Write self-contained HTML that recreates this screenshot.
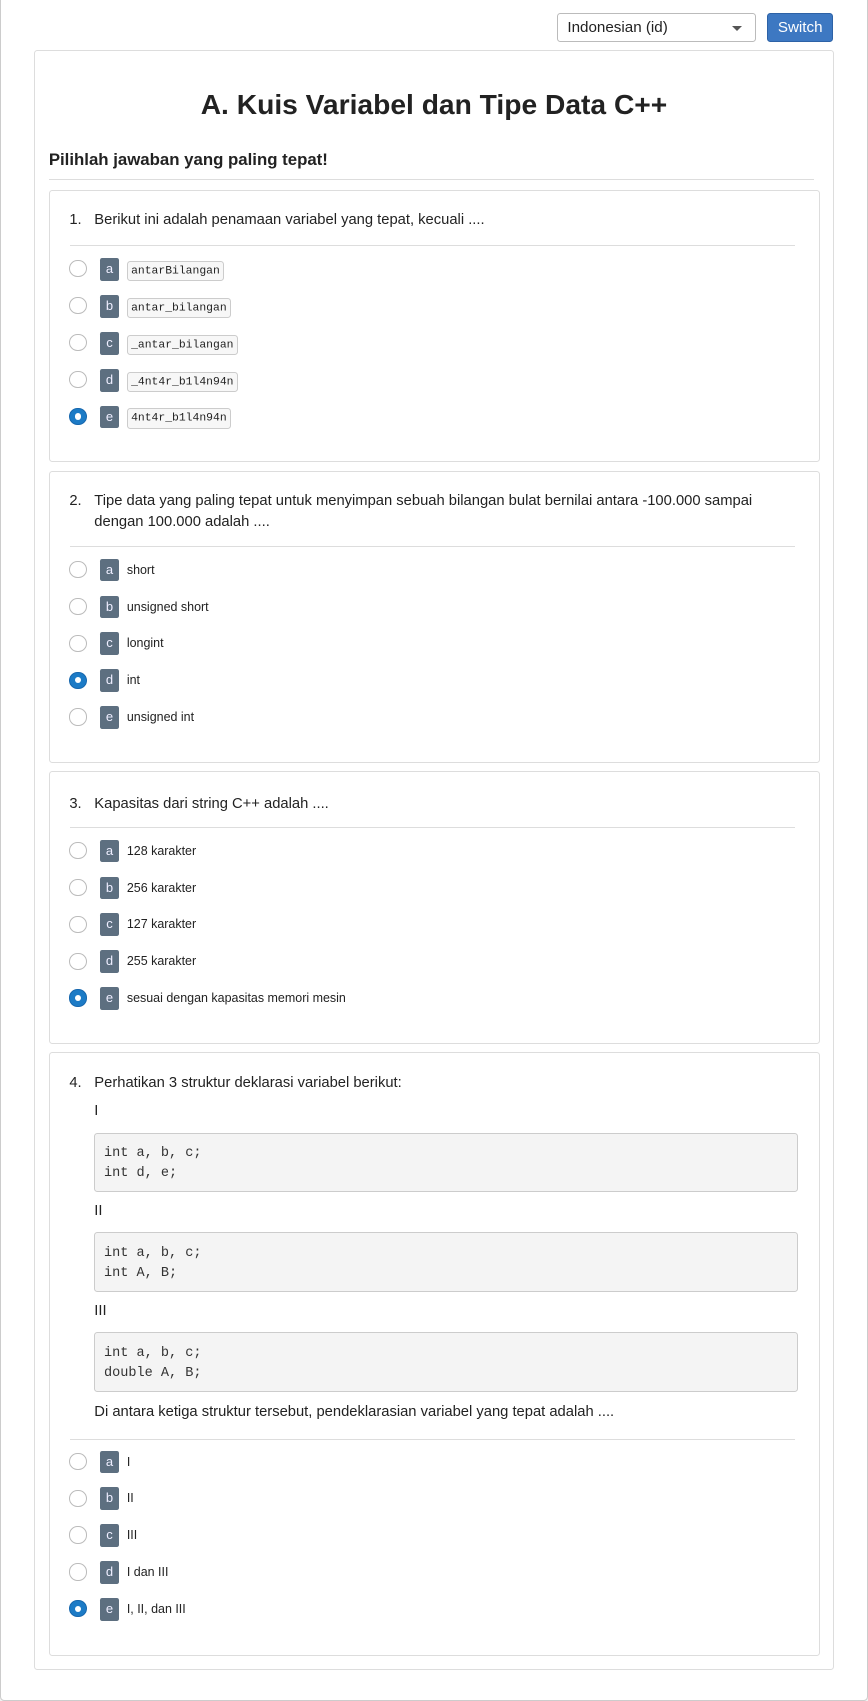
<!DOCTYPE html>
<html><head><meta charset="utf-8">
<style>
html{zoom:1.085}
body{margin:0;width:800px;height:1568px;background:#f2f2f2;font-family:"Liberation Sans",sans-serif;color:#222;position:relative;overflow:hidden}
.frame{position:absolute;left:0;top:-6px;width:798px;height:1572px;background:#fff;border:1px solid #ccc;border-radius:4px}
.abs{position:absolute}
.sel{left:513px;top:12px;width:184px;border:1px solid #bbb;border-radius:3px;background:#fff;font-size:14px;line-height:25px;box-sizing:border-box;padding-left:9px;height:27px}
.sel:after{content:"";position:absolute;right:12px;top:11px;border:5px solid transparent;border-top:5px solid #555}
.btn{left:707px;top:12px;width:61px;height:27px;background:#3d78c2;border:1px solid #2d62a6;border-radius:3px;box-sizing:border-box;color:#fff;font-size:14px;text-align:center;line-height:25px}
.main{left:31px;top:46px;width:736px;height:1491px;border:1px solid #ddd;border-radius:3px;background:#fff}
h1{position:absolute;left:31px;width:738px;top:81px;margin:0;text-align:center;font-size:26px;font-weight:bold;color:#222}
.sub{left:45px;top:138px;font-size:15.5px;font-weight:bold}
.hr{position:absolute;height:1px;background:#ddd}
.card{position:absolute;left:45px;width:709px;border:1px solid #ddd;border-radius:3px;background:#fff}
.q{position:absolute;left:18px;font-size:13.6px;line-height:19px;color:#222}
.q .n{position:absolute;left:0}
.q .t{position:absolute;left:23px;width:650px}
.opt{position:absolute;left:18px;height:21px;font-size:11.5px;line-height:22px}
.r{position:absolute;left:0;top:2px;width:14px;height:14px;border:1px solid #bbb;border-radius:50%;background:#fff}
.r.c{border:1px solid #1667ae;background:#1c7bc6}
.r.c:after{content:"";position:absolute;left:4px;top:4px;width:6px;height:6px;border-radius:50%;background:#fff}
.b{position:absolute;left:28px;top:0;width:18px;height:21px;background:#5d6f80;color:#eef;border-radius:2px;text-align:center;font-size:12px;line-height:21px}
.l{position:absolute;left:53px;top:0;white-space:nowrap}
code{font-family:"Liberation Mono",monospace;font-size:10.5px;background:#f7f7f7;border:1px solid #ccc;border-radius:3px;padding:3px 3px}
pre{position:absolute;left:41px;width:649px;height:55px;margin:0;background:#f4f4f4;border:1px solid #ccc;border-radius:3px;box-sizing:border-box;padding:10px 8px;font-family:"Liberation Mono",monospace;font-size:12.5px;line-height:18px;color:#333}
.rm{position:absolute;left:41px;font-size:13.6px}
</style></head><body>
<div class="frame"></div>
<div class="abs sel">Indonesian (id)</div>
<div class="abs btn">Switch</div>
<div class="abs main"></div>
<h1>A. Kuis Variabel dan Tipe Data C++</h1>
<div class="abs sub">Pilihlah jawaban yang paling tepat!</div>
<div class="hr" style="left:45px;top:165px;width:705px"></div>

<div class="card" style="top:175px;height:249px">
 <div class="q" style="top:18px"><span class="n">1.</span><span class="t">Berikut ini adalah penamaan variabel yang tepat, kecuali ....</span></div>
 <div class="hr" style="left:19px;top:50px;width:668px"></div>
 <div class="opt" style="top:62px"><span class="r"></span><span class="b">a</span><span class="l"><code>antarBilangan</code></span></div>
 <div class="opt" style="top:96px"><span class="r"></span><span class="b">b</span><span class="l"><code>antar_bilangan</code></span></div>
 <div class="opt" style="top:130px"><span class="r"></span><span class="b">c</span><span class="l"><code>_antar_bilangan</code></span></div>
 <div class="opt" style="top:164px"><span class="r"></span><span class="b">d</span><span class="l"><code>_4nt4r_b1l4n94n</code></span></div>
 <div class="opt" style="top:198px"><span class="r c"></span><span class="b">e</span><span class="l"><code>4nt4r_b1l4n94n</code></span></div>
</div>

<div class="card" style="top:434px;height:267px">
 <div class="q" style="top:18px"><span class="n">2.</span><span class="t">Tipe data yang paling tepat untuk menyimpan sebuah bilangan bulat bernilai antara -100.000 sampai dengan 100.000 adalah ....</span></div>
 <div class="hr" style="left:19px;top:68px;width:668px"></div>
 <div class="opt" style="top:80px"><span class="r"></span><span class="b">a</span><span class="l">short</span></div>
 <div class="opt" style="top:114px"><span class="r"></span><span class="b">b</span><span class="l">unsigned short</span></div>
 <div class="opt" style="top:148px"><span class="r"></span><span class="b">c</span><span class="l">longint</span></div>
 <div class="opt" style="top:182px"><span class="r c"></span><span class="b">d</span><span class="l">int</span></div>
 <div class="opt" style="top:216px"><span class="r"></span><span class="b">e</span><span class="l">unsigned int</span></div>
</div>

<div class="card" style="top:711px;height:249px">
 <div class="q" style="top:20px"><span class="n">3.</span><span class="t">Kapasitas dari string C++ adalah ....</span></div>
 <div class="hr" style="left:19px;top:50px;width:668px"></div>
 <div class="opt" style="top:62px"><span class="r"></span><span class="b">a</span><span class="l">128 karakter</span></div>
 <div class="opt" style="top:96px"><span class="r"></span><span class="b">b</span><span class="l">256 karakter</span></div>
 <div class="opt" style="top:130px"><span class="r"></span><span class="b">c</span><span class="l">127 karakter</span></div>
 <div class="opt" style="top:164px"><span class="r"></span><span class="b">d</span><span class="l">255 karakter</span></div>
 <div class="opt" style="top:198px"><span class="r c"></span><span class="b">e</span><span class="l">sesuai dengan kapasitas memori mesin</span></div>
</div>

<div class="card" style="top:970px;height:554px">
 <div class="q" style="top:18px"><span class="n">4.</span><span class="t">Perhatikan 3 struktur deklarasi variabel berikut:</span></div>
 <div class="rm" style="top:46px">I</div>
 <pre style="top:73px">int a, b, c;
int d, e;</pre>
 <div class="rm" style="top:138px">II</div>
 <pre style="top:165px">int a, b, c;
int A, B;</pre>
 <div class="rm" style="top:230px">III</div>
 <pre style="top:257px">int a, b, c;
double A, B;</pre>
 <div class="rm" style="top:323px">Di antara ketiga struktur tersebut, pendeklarasian variabel yang tepat adalah ....</div>
 <div class="hr" style="left:19px;top:355px;width:668px"></div>
 <div class="opt" style="top:366px"><span class="r"></span><span class="b">a</span><span class="l">I</span></div>
 <div class="opt" style="top:400px"><span class="r"></span><span class="b">b</span><span class="l">II</span></div>
 <div class="opt" style="top:434px"><span class="r"></span><span class="b">c</span><span class="l">III</span></div>
 <div class="opt" style="top:468px"><span class="r"></span><span class="b">d</span><span class="l">I dan III</span></div>
 <div class="opt" style="top:502px"><span class="r c"></span><span class="b">e</span><span class="l">I, II, dan III</span></div>
</div>
</body></html>
